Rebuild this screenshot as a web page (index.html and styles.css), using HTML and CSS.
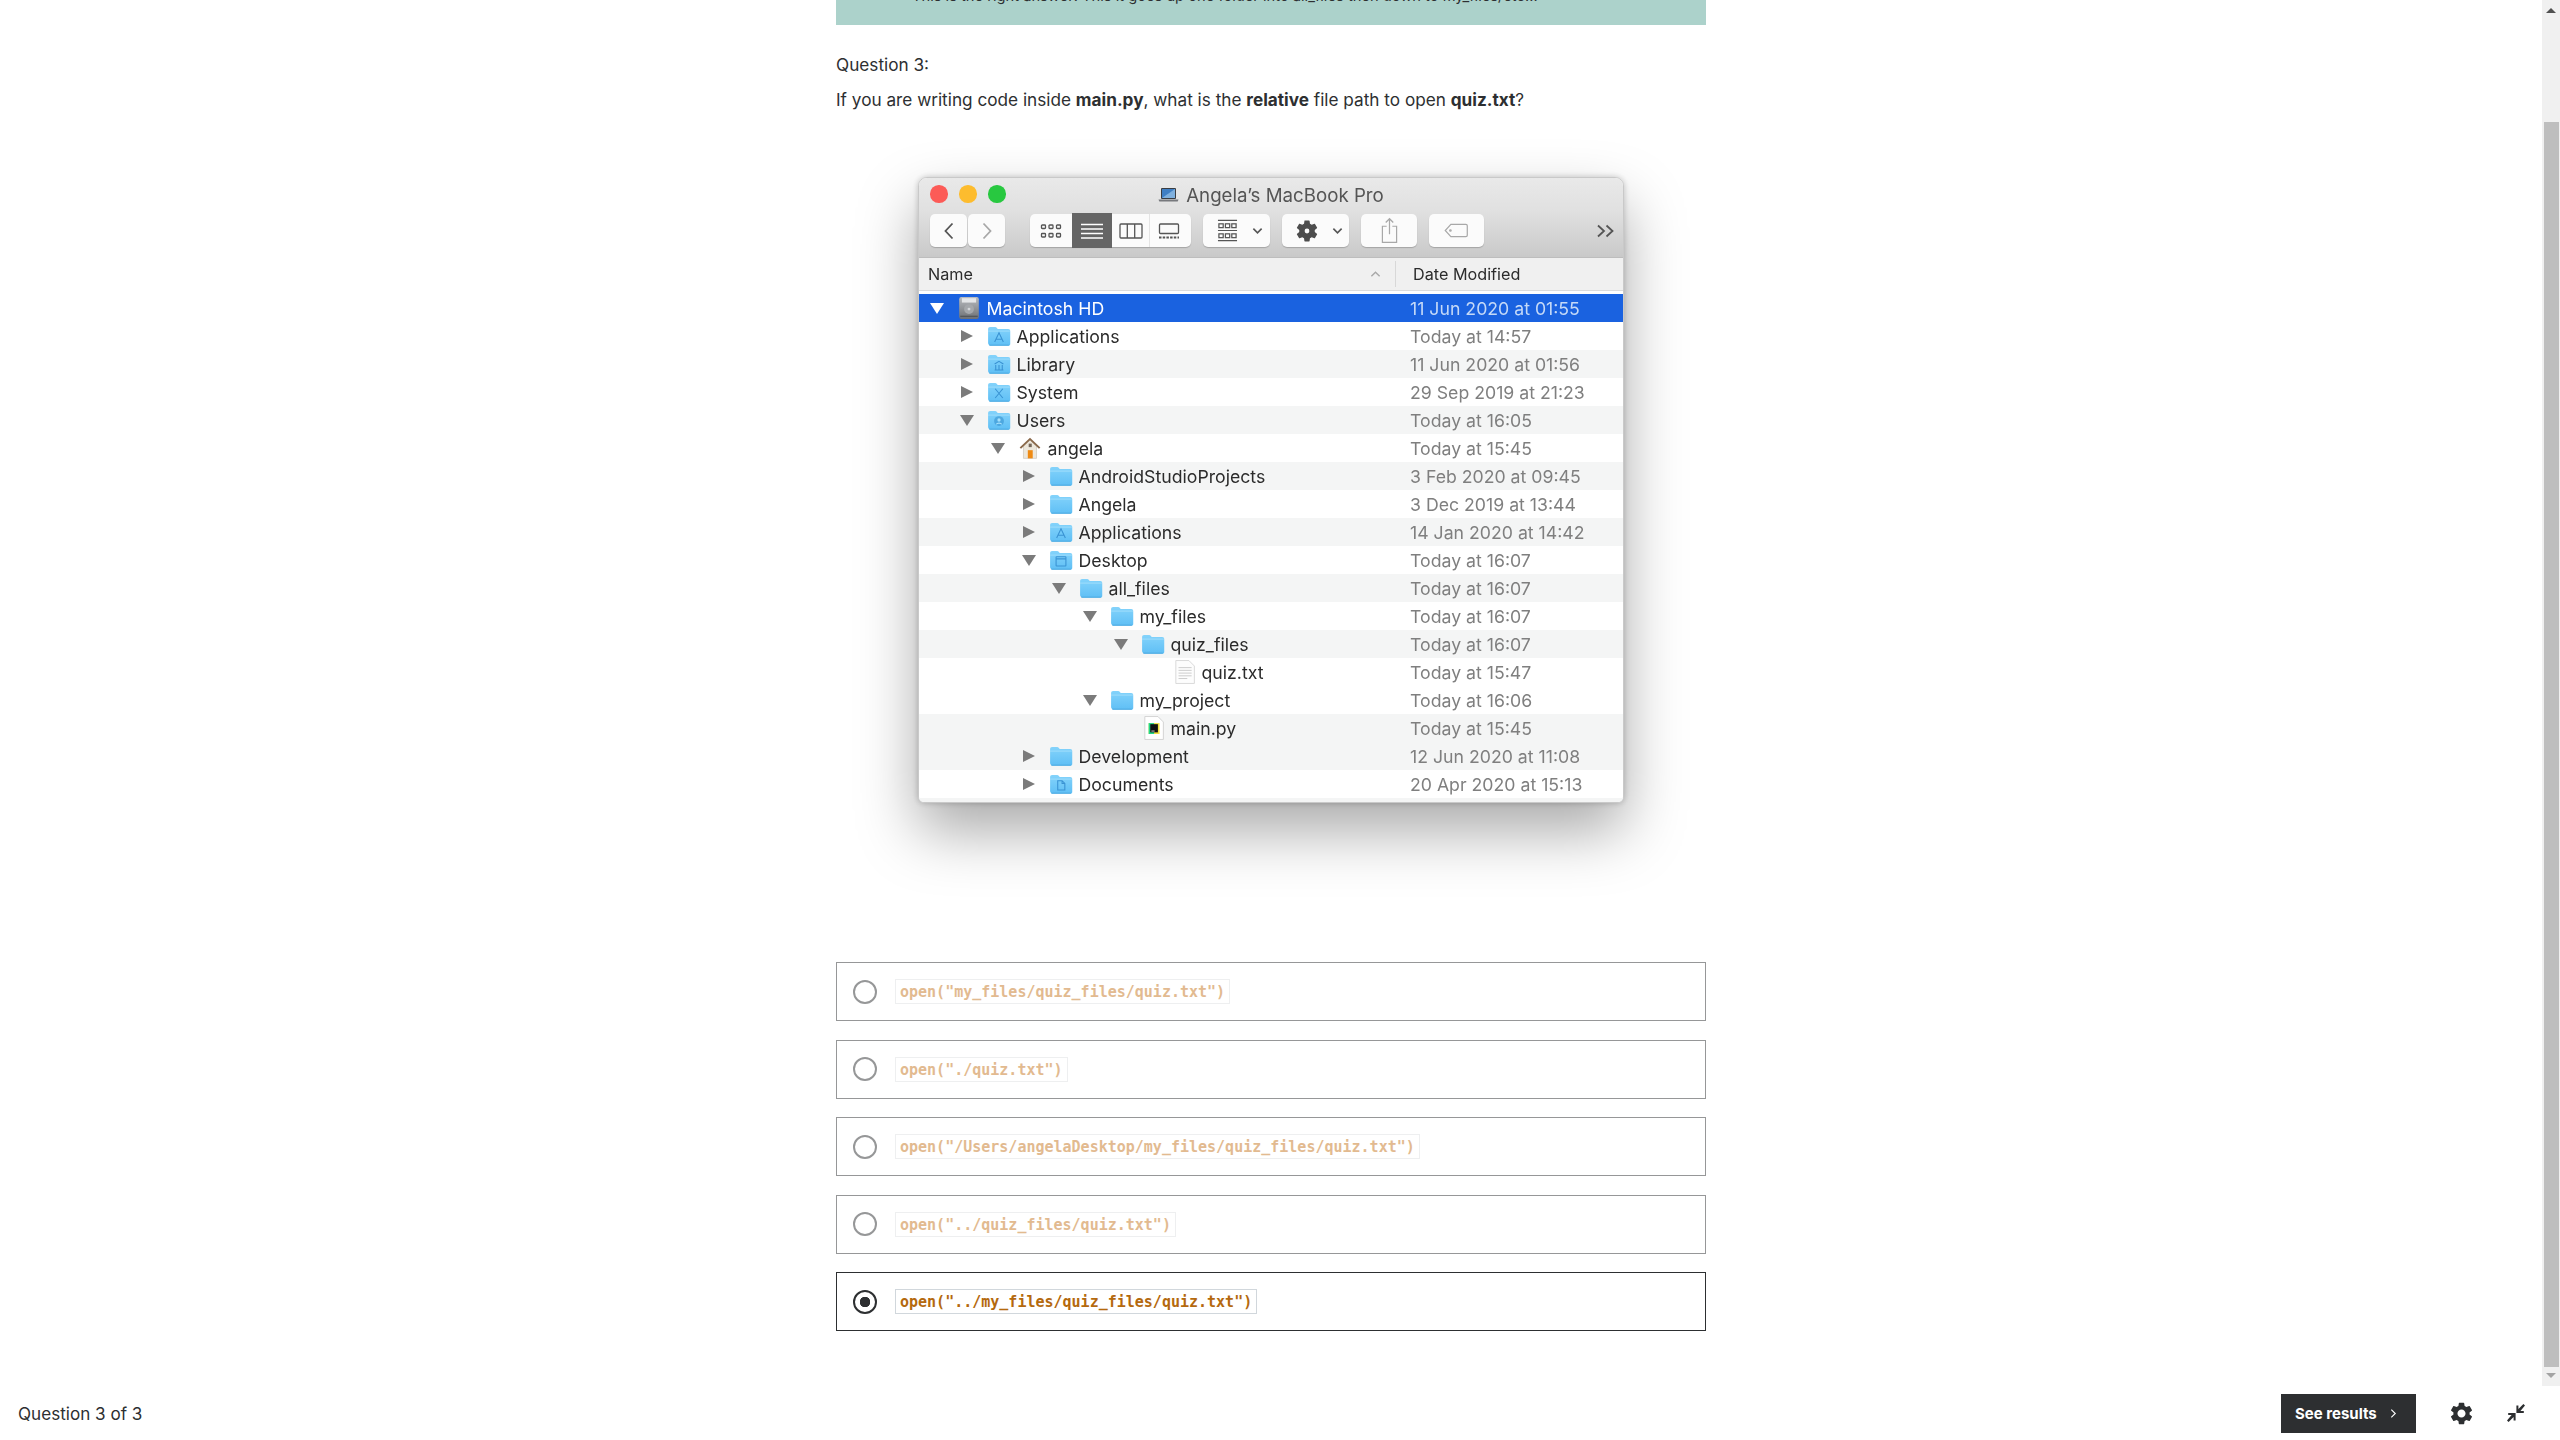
FILE: index.html
```html
<!DOCTYPE html>
<html>
  <head>
    <title>Question 3 of 3</title>
    <link rel="stylesheet" href="styles.css">
  </head>
  <body>
    <svg class="sprite" aria-hidden="true">
      <defs>
        <linearGradient id="folderFill" x1="0" y1="0" x2="0" y2="1">
          <stop offset="0" stop-color="#84d3fb"/>
          <stop offset="1" stop-color="#5fbff5"/>
        </linearGradient>
        <linearGradient id="driveFill" x1="0" y1="0" x2="0" y2="1">
          <stop offset="0" stop-color="#b9bcc0"/>
          <stop offset="1" stop-color="#6d7074"/>
        </linearGradient>
        <symbol id="folder" viewBox="0 0 22 19">
          <path d="M1 3.2C1 2 1.7 1.2 2.8 1.2h4.6c.8 0 1.2.3 1.7.9l.7.9h9.6c1.2 0 1.9.7 1.9 1.9v11.6c0 1.2-.7 1.9-1.9 1.9H2.9C1.7 17.5 1 16.8 1 15.6z" fill="url(#folderFill)"/>
          <path d="M1 5h20" stroke="#a5e0fc" stroke-width=".8"/>
          <path d="M2 17.9h18" stroke="#4ba6dc" stroke-width=".8"/>
        </symbol>
        <symbol id="gear" viewBox="0 0 24 24">
          <path d="M19.14 12.94c.04-.3.06-.61.06-.94 0-.32-.02-.64-.07-.94l2.03-1.58a.49.49 0 0 0 .12-.61l-1.92-3.32a.488.488 0 0 0-.59-.22l-2.39.96c-.5-.38-1.03-.7-1.62-.94l-.36-2.54a.484.484 0 0 0-.48-.41h-3.84c-.24 0-.43.17-.47.41l-.36 2.54c-.59.24-1.13.57-1.62.94l-2.39-.96c-.22-.08-.47 0-.59.22L2.74 8.87c-.12.21-.08.47.12.61l2.03 1.58c-.05.3-.09.63-.09.94s.02.64.07.94l-2.03 1.58a.49.49 0 0 0-.12.61l1.92 3.32c.12.22.37.29.59.22l2.39-.96c.5.38 1.03.7 1.62.94l.36 2.54c.05.24.24.41.48.41h3.84c.24 0 .44-.17.47-.41l.36-2.54c.59-.24 1.13-.56 1.62-.94l2.39.96c.22.08.47 0 .59-.22l1.92-3.32c.12-.22.07-.47-.12-.61l-2.01-1.58zM12 15.6c-1.98 0-3.6-1.62-3.6-3.6s1.62-3.6 3.6-3.6 3.6 1.62 3.6 3.6-1.62 3.6-3.6 3.6z"/>
        </symbol>
      </defs>
    </svg>

    <div class="player">
      <div class="viewport">
        <main class="content">
          <div class="banner">
            <p>This is the right answer! This it goes up one folder into all_files then down to my_files/etc...</p>
          </div>

          <p class="prompt prompt-first">Question 3:</p>
          <p class="prompt">If you are writing code inside <strong>main.py</strong>, what is the <strong>relative</strong> file path to open <strong>quiz.txt</strong>?</p>

          <div class="finder">
            <div class="titlebar">
              <div class="lights">
                <span class="light red"></span>
                <span class="light amber"></span>
                <span class="light green"></span>
              </div>
              <div class="title">
                <svg class="laptop" viewBox="0 0 21 16">
                  <rect x="3" y="1" width="15" height="11" rx="1" fill="#3a3d42"/>
                  <rect x="4" y="2" width="13" height="9" fill="#3f7fc4"/>
                  <path d="M4 11 17 2v9z" fill="#7fb0de"/>
                  <path d="M.5 12.5h20l-.8 2H1.3z" fill="#77797d"/>
                </svg>
                <span>Angela’s MacBook Pro</span>
              </div>
            </div>

            <div class="toolbar">
              <div class="tool nav-btn">
                <svg viewBox="0 0 14 20"><path d="M10.5 2.5 3.5 10l7 7.5" class="glyph"/></svg>
              </div>
              <div class="tool nav-btn nav-next">
                <svg viewBox="0 0 14 20"><path d="M3.5 2.5 10.5 10l-7 7.5" class="glyph faint"/></svg>
              </div>

              <div class="tool views">
                <span class="view view-icons">
                  <svg viewBox="0 0 22 16">
                    <g class="thin">
                      <rect x="1.5" y="2" width="4" height="3.5" rx=".8"/><rect x="9" y="2" width="4" height="3.5" rx=".8"/><rect x="16.5" y="2" width="4" height="3.5" rx=".8"/>
                      <rect x="1.5" y="10.5" width="4" height="3.5" rx=".8"/><rect x="9" y="10.5" width="4" height="3.5" rx=".8"/><rect x="16.5" y="10.5" width="4" height="3.5" rx=".8"/>
                    </g>
                  </svg>
                </span>
                <span class="view view-list">
                  <svg viewBox="0 0 22 16"><path d="M0 1.5h22M0 6h22M0 10.5h22M0 15h22" class="bars"/></svg>
                </span>
                <span class="view view-columns">
                  <svg viewBox="0 0 24 16"><g class="thin"><rect x="1" y="1" width="22" height="14" rx="1"/><path d="M8.3 1v14M15.7 1v14"/></g></svg>
                </span>
                <span class="view view-gallery">
                  <svg viewBox="0 0 22 16"><g class="thin"><rect x="1.5" y="1" width="19" height="9.5" rx="1"/></g><path d="M1 14.5h20" class="dots"/></svg>
                </span>
              </div>

              <div class="tool arrange">
                <svg class="arrange-icon" viewBox="0 0 22 24">
                  <g class="thin">
                    <path d="M1 1.5h20M1 12h20M1 22.5h20"/>
                    <rect x="2" y="5" width="4.5" height="4"/><rect x="8.8" y="5" width="4.5" height="4"/><rect x="15.5" y="5" width="4.5" height="4"/>
                    <rect x="2" y="15.5" width="4.5" height="4"/><rect x="8.8" y="15.5" width="4.5" height="4"/><rect x="15.5" y="15.5" width="4.5" height="4"/>
                  </g>
                </svg>
                <svg class="caret" viewBox="0 0 12 8"><path d="M1.5 1.5 6 6l4.5-4.5" class="glyph"/></svg>
              </div>

              <div class="tool action">
                <svg class="action-gear" viewBox="0 0 24 24">
                  <use href="#gear"/>
                  <circle cx="12" cy="12" r="5" fill="#4d4d4d"/>
                  <circle cx="12" cy="12" r="2.2" fill="#fbfbfb"/>
                </svg>
                <svg class="caret" viewBox="0 0 12 8"><path d="M1.5 1.5 6 6l4.5-4.5" class="glyph"/></svg>
              </div>

              <div class="tool share">
                <svg viewBox="0 0 18 28"><g class="thin faint-line"><path d="M6 9.5H1.5v17h15v-17H12"/><path d="M9 18V2M5 5.5 9 1.5l4 4"/></g></svg>
              </div>

              <div class="tool tag">
                <svg viewBox="0 0 26 16"><g class="thin faint-line"><path d="M7 1.5h16a1.5 1.5 0 0 1 1.5 1.5v10a1.5 1.5 0 0 1-1.5 1.5H7L1 8z"/><circle cx="6.5" cy="8" r=".8"/></g></svg>
              </div>

              <svg class="more" viewBox="0 0 17 14"><path d="M1 1.5 7 7l-6 5.5M9.5 1.5l6 5.5-6 5.5" class="glyph"/></svg>
            </div>

            <div class="columns">
              <span class="col-name">Name</span>
              <svg class="sort" viewBox="0 0 12 8"><path d="M1.5 6.5 6 2l4.5 4.5"/></svg>
              <span class="col-date">Date Modified</span>
            </div>

            <div class="list">
              <div class="row selected level-0">
                <i class="twist down"></i>
                <svg class="icon" viewBox="0 0 22 22">
                  <rect x="2" y="1" width="18" height="20" rx="2" fill="url(#driveFill)"/>
                  <rect x="4.5" y="2" width="13" height="4" fill="#e4e6e8"/>
                  <circle cx="11" cy="12" r="4.5" fill="#a5a8ac"/>
                  <circle cx="11" cy="12" r="1.3" fill="#d5d7da"/>
                  <path d="M3 18.5h16" stroke="#4a4c50"/>
                </svg>
                <span class="name">Macintosh HD</span>
                <span class="date">11 Jun 2020 at 01:55</span>
              </div>
              <div class="row level-1">
                <i class="twist"></i>
                <svg class="icon" viewBox="0 0 22 19"><use href="#folder"/><path d="M7 15 11 6.5 15 15M8 12.5h6" class="badge"/></svg>
                <span class="name">Applications</span>
                <span class="date">Today at 14:57</span>
              </div>
              <div class="row alt level-1">
                <i class="twist"></i>
                <svg class="icon" viewBox="0 0 22 19"><use href="#folder"/><path d="M7 9.5 11 7l4 2.5M8 10.5v4M11 10.5v4M14 10.5v4M7 15h8" class="badge"/></svg>
                <span class="name">Library</span>
                <span class="date">11 Jun 2020 at 01:56</span>
              </div>
              <div class="row level-1">
                <i class="twist"></i>
                <svg class="icon" viewBox="0 0 22 19"><use href="#folder"/><path d="M7.5 6.5 14.5 15M14.5 6.5 7.5 15" class="badge"/></svg>
                <span class="name">System</span>
                <span class="date">29 Sep 2019 at 21:23</span>
              </div>
              <div class="row alt level-1">
                <i class="twist down"></i>
                <svg class="icon" viewBox="0 0 22 19"><use href="#folder"/><circle cx="11" cy="10.5" r="4.5" fill="#3f9ad6" fill-opacity=".7"/><circle cx="11" cy="9.5" r="1.5" fill="#a5e0fc"/><path d="M8.5 13.5c.6-1.5 4.4-1.5 5 0" stroke="#a5e0fc" fill="none"/></svg>
                <span class="name">Users</span>
                <span class="date">Today at 16:05</span>
              </div>
              <div class="row level-2">
                <i class="twist down"></i>
                <svg class="icon" viewBox="0 0 22 22">
                  <path d="M5 9 11 3.5 17 9v11.5H5z" fill="#ece7dc" stroke="#c9c2b4" stroke-width=".6"/>
                  <path d="M11 1.5 1.5 10.5l1.3 1.2L11 4l8.2 7.7 1.3-1.2z" fill="#8a6a4c"/>
                  <rect x="9" y="13" width="4.5" height="7.5" fill="#ef8a12"/>
                  <rect x="9.8" y="7" width="2.8" height="3.2" fill="#76685a"/>
                </svg>
                <span class="name">angela</span>
                <span class="date">Today at 15:45</span>
              </div>
              <div class="row alt level-3">
                <i class="twist"></i>
                <svg class="icon" viewBox="0 0 22 19"><use href="#folder"/></svg>
                <span class="name">AndroidStudioProjects</span>
                <span class="date">3 Feb 2020 at 09:45</span>
              </div>
              <div class="row level-3">
                <i class="twist"></i>
                <svg class="icon" viewBox="0 0 22 19"><use href="#folder"/></svg>
                <span class="name">Angela</span>
                <span class="date">3 Dec 2019 at 13:44</span>
              </div>
              <div class="row alt level-3">
                <i class="twist"></i>
                <svg class="icon" viewBox="0 0 22 19"><use href="#folder"/><path d="M7 15 11 6.5 15 15M8 12.5h6" class="badge"/></svg>
                <span class="name">Applications</span>
                <span class="date">14 Jan 2020 at 14:42</span>
              </div>
              <div class="row level-3">
                <i class="twist down"></i>
                <svg class="icon" viewBox="0 0 22 19"><use href="#folder"/><rect x="6.5" y="6.5" width="9" height="8.5" rx=".5" class="badge"/><path d="M6.5 8.5h9" class="badge"/></svg>
                <span class="name">Desktop</span>
                <span class="date">Today at 16:07</span>
              </div>
              <div class="row alt level-4">
                <i class="twist down"></i>
                <svg class="icon" viewBox="0 0 22 19"><use href="#folder"/></svg>
                <span class="name">all_files</span>
                <span class="date">Today at 16:07</span>
              </div>
              <div class="row level-5">
                <i class="twist down"></i>
                <svg class="icon" viewBox="0 0 22 19"><use href="#folder"/></svg>
                <span class="name">my_files</span>
                <span class="date">Today at 16:07</span>
              </div>
              <div class="row alt level-6">
                <i class="twist down"></i>
                <svg class="icon" viewBox="0 0 22 19"><use href="#folder"/></svg>
                <span class="name">quiz_files</span>
                <span class="date">Today at 16:07</span>
              </div>
              <div class="row level-7">
                <i class="twist none"></i>
                <svg class="icon" viewBox="0 0 22 22">
                  <path d="M3.5.5h12l5 5v16h-17z" fill="#fdfdfd" stroke="#d5d5d5" stroke-width=".8"/>
                  <path d="M6 7h12M6 9.5h12M6 12h12M6 14.5h12M6 17h8" stroke="#c6c6c6" stroke-width=".8"/>
                </svg>
                <span class="name">quiz.txt</span>
                <span class="date">Today at 15:47</span>
              </div>
              <div class="row level-5">
                <i class="twist down"></i>
                <svg class="icon" viewBox="0 0 22 19"><use href="#folder"/></svg>
                <span class="name">my_project</span>
                <span class="date">Today at 16:06</span>
              </div>
              <div class="row alt level-6">
                <i class="twist none"></i>
                <svg class="icon" viewBox="0 0 22 22">
                  <path d="M3.5.5h12l5 5v16h-17z" fill="#fff" stroke="#cfcfcf" stroke-width=".8"/>
                  <rect x="7" y="6.5" width="10" height="10" fill="#f0e040"/>
                  <rect x="7" y="6.5" width="5" height="10" fill="#21d789"/>
                  <rect x="8.5" y="7.5" width="7" height="7.5" fill="#111"/>
                  <path d="M9.5 13.8h3" stroke="#fff" stroke-width=".7"/>
                </svg>
                <span class="name">main.py</span>
                <span class="date">Today at 15:45</span>
              </div>
              <div class="row alt level-3">
                <i class="twist"></i>
                <svg class="icon" viewBox="0 0 22 19"><use href="#folder"/></svg>
                <span class="name">Development</span>
                <span class="date">12 Jun 2020 at 11:08</span>
              </div>
              <div class="row level-3">
                <i class="twist"></i>
                <svg class="icon" viewBox="0 0 22 19"><use href="#folder"/><path d="M8 6.5h4l2.5 2.5v6H8zM12 6.5V9h2.5" class="badge"/></svg>
                <span class="name">Documents</span>
                <span class="date">20 Apr 2020 at 15:13</span>
              </div>
              <div class="row alt"></div>
            </div>
          </div>

          <ul class="answers">
            <li class="answer">
              <span class="radio"></span>
              <code>open("my_files/quiz_files/quiz.txt")</code>
            </li>
            <li class="answer">
              <span class="radio"></span>
              <code>open("./quiz.txt")</code>
            </li>
            <li class="answer">
              <span class="radio"></span>
              <code>open("/Users/angelaDesktop/my_files/quiz_files/quiz.txt")</code>
            </li>
            <li class="answer">
              <span class="radio"></span>
              <code>open("../quiz_files/quiz.txt")</code>
            </li>
            <li class="answer checked">
              <span class="radio"></span>
              <code>open("../my_files/quiz_files/quiz.txt")</code>
            </li>
          </ul>
        </main>

        <div class="scrollbar">
          <span class="arrow-up"></span>
          <span class="thumb"></span>
          <span class="arrow-down"></span>
        </div>
      </div>

      <footer class="footer">
        <span class="progress">Question 3 of 3</span>
        <button class="results">
          See results
          <svg viewBox="0 0 8 12"><path d="M1.5 1.5 6 6l-4.5 4.5"/></svg>
        </button>
        <svg class="settings" viewBox="0 0 24 24"><use href="#gear"/></svg>
        <svg class="compress" viewBox="0 0 20 20">
          <path d="M19 2.6 17.4 1l-5 5V2.6h-2V10h7.400V8h-3.400zM1 17.4 2.6 19l5-5v3.400h2V10H2.200v2h3.400z"/>
        </svg>
      </footer>
    </div>
  </body>
</html>
```

FILE: styles.css
```css
* {
  box-sizing: border-box;
}

html,
body {
  height: 100%;
}

body {
  margin: 0;
  overflow: hidden;
  background-color: #fff;
  color: #2d2f31;
  font-family: Inter, "Liberation Sans", Arial, sans-serif;
  font-size: 17px;
}

.sprite {
  display: block;
  width: 0;
  height: 0;
}

.player {
  display: flex;
  flex-direction: column;
  height: 1440px;
}

.viewport {
  display: flex;
  height: 1386px;
  overflow: hidden;
}

.content {
  flex: 1;
  min-width: 0;
  padding: 0 836px;
}

/* feedback box from the previous question, scrolled nearly out of view */
.banner {
  height: 25px;
  padding-left: 76px;
  overflow: hidden;
  background-color: #acd2cb;
}

.banner p {
  margin: -14px 0 0;
  font-size: 14.7px;
  line-height: 20px;
  white-space: nowrap;
}

.prompt {
  margin: 13px 0 0;
  font-size: 17.2px;
  line-height: 22px;
}

.prompt-first {
  margin-top: 29px;
}

/* the finder window */
.finder {
  width: 706px;
  height: 626px;
  margin: 66px auto 159px;
  overflow: hidden;
  border: 1px solid #c9c9c9;
  border-radius: 9px 9px 6px 6px;
  background-color: #fff;
  box-shadow: 0 28px 60px rgba(0, 0, 0, 0.34), 0 0 6px rgba(0, 0, 0, 0.22);
  color: #2b2b2b;
  filter: blur(0.4px);
}

.titlebar {
  display: flex;
  align-items: center;
  justify-content: center;
  position: relative;
  height: 34px;
  background: linear-gradient(#e9e9e9, #e0e0e0);
}

.lights {
  display: flex;
  gap: 11.5px;
  position: absolute;
  left: 11px;
  top: 7px;
}

.light {
  width: 17.5px;
  height: 17.5px;
  border-radius: 50%;
}

.red {
  background-color: #fc5b57;
}

.amber {
  background-color: #fdbc2e;
}

.green {
  background-color: #28c840;
}

.title {
  display: flex;
  align-items: center;
  gap: 7px;
  color: #555;
  font-size: 18.7px;
}

.laptop {
  width: 21px;
  height: 16px;
}

.toolbar {
  display: flex;
  align-items: center;
  height: 46px;
  padding: 0 9px 8px 11px;
  background: linear-gradient(#e0e0e0, #c9c9c9);
  border-bottom: 1px solid #bdbdbd;
}

.tool {
  display: flex;
  align-items: center;
  justify-content: center;
  height: 33px;
  border-radius: 5px;
  background-color: #fbfbfb;
  box-shadow: 0 1px 1px rgba(0, 0, 0, 0.2);
}

.glyph {
  fill: none;
  stroke: #555;
  stroke-width: 1.8;
}

.faint {
  stroke: #a8a8a8;
}

.thin {
  fill: none;
  stroke: #555;
  stroke-width: 1.3;
}

.faint-line {
  stroke: #a8a8a8;
}

.nav-btn {
  width: 37px;
}

.nav-btn svg {
  width: 14px;
  height: 20px;
}

.nav-next {
  margin-left: 1px;
}

.views {
  width: 161px;
  margin-left: 25px;
}

.view {
  display: flex;
  align-items: center;
  justify-content: center;
  height: 33px;
}

.view-icons {
  width: 42px;
}

.view-icons svg {
  width: 22px;
  height: 16px;
}

.view-list {
  width: 40px;
  height: 35px;
  background-color: #656565;
}

.view-list svg {
  width: 22px;
  height: 16px;
}

.bars {
  stroke: #fff;
  stroke-width: 1.4;
}

.view-columns {
  width: 38px;
  border-right: 1px solid #e4e4e4;
}

.view-columns svg {
  width: 24px;
  height: 16px;
}

.view-gallery {
  width: 41px;
  padding-right: 3px;
}

.view-gallery svg {
  width: 22px;
  height: 16px;
}

.dots {
  stroke: #555;
  stroke-width: 2;
  stroke-dasharray: 2.5 1.2;
}

.arrange {
  justify-content: flex-start;
  width: 67px;
  gap: 14px;
  margin-left: 12px;
  padding-left: 14px;
}

.arrange-icon {
  width: 21px;
  height: 23px;
}

.caret {
  width: 11px;
  height: 8px;
}

.action {
  justify-content: flex-start;
  width: 67px;
  gap: 12px;
  margin-left: 12px;
  padding-left: 12px;
}

.action-gear {
  width: 26px;
  height: 26px;
  fill: #4d4d4d;
}

.share {
  width: 56px;
  margin-left: 12px;
}

.share svg {
  width: 17px;
  height: 27px;
}

.tag {
  width: 55px;
  margin-left: 12px;
}

.tag svg {
  width: 25px;
  height: 15px;
}

.more {
  width: 17px;
  height: 14px;
  margin-left: auto;
}

.columns {
  display: flex;
  align-items: center;
  height: 33px;
  padding-left: 9px;
  background-color: #f0f0f0;
  border-bottom: 1px solid #dcdcdc;
  font-size: 16.2px;
}

.col-name {
  flex: 1;
}

.sort {
  width: 11px;
  height: 8px;
  margin-right: 14px;
  fill: none;
  stroke: #a8a8a8;
  stroke-width: 1.5;
}

.col-date {
  width: 228px;
  height: 26px;
  padding-left: 17px;
  border-left: 1px solid #d8d8d8;
  line-height: 26px;
}

.list {
  padding-top: 3px;
}

.row {
  display: flex;
  align-items: center;
  height: 28px;
  font-size: 17.7px;
}

.alt {
  background-color: #f4f5f5;
}

.selected {
  background-color: #1a62e0;
  color: #fff;
}

.selected .date {
  color: #c5d9f7;
}

.selected .twist.down {
  border-top-color: #fff;
}

.level-0 {
  padding-left: 10px;
}

.level-1 {
  padding-left: 40px;
}

.level-2 {
  padding-left: 71px;
}

.level-3 {
  padding-left: 102px;
}

.level-4 {
  padding-left: 132px;
}

.level-5 {
  padding-left: 163px;
}

.level-6 {
  padding-left: 194px;
}

.level-7 {
  padding-left: 225px;
}

.twist {
  display: block;
  width: 0;
  height: 0;
  margin-left: 2px;
  margin-right: 14px;
  border-left: 12px solid #7b7b7b;
  border-top: 6.5px solid transparent;
  border-bottom: 6.5px solid transparent;
}

.twist.down {
  margin-left: 1px;
  margin-right: 13px;
  border-left: 7px solid transparent;
  border-right: 7px solid transparent;
  border-top: 11px solid #7b7b7b;
  border-bottom: 0;
}

.twist.none {
  border-color: transparent;
}

.icon {
  flex: none;
  width: 24px;
  height: 24px;
  margin-right: 5.5px;
}

.badge {
  fill: none;
  stroke: #3a93d3;
  stroke-width: 1;
}

.name {
  flex: 1;
}

.date {
  width: 213px;
  color: #7f7f7f;
}

/* answer list */
.answers {
  display: flex;
  flex-direction: column;
  gap: 18.5px;
  margin: 0;
  padding: 0;
  list-style: none;
}

.answer {
  display: flex;
  align-items: center;
  height: 59px;
  padding-left: 16px;
  border: 1px solid #969798;
}

.radio {
  flex: none;
  width: 24px;
  height: 24px;
  margin-right: 18px;
  border: 2px solid #969798;
  border-radius: 50%;
}

code {
  padding: 4px 4px 2px;
  border: 1px solid #eeeff0;
  background-color: #fff;
  color: #e2ba90;
  font-family: "DejaVu Sans Mono", "Liberation Mono", monospace;
  font-size: 15px;
  font-weight: bold;
  line-height: 17px;
}

.checked {
  border-color: #2d2f31;
}

.checked .radio {
  border-color: #2d2f31;
  background: radial-gradient(circle, #2d2f31 0 5px, #fff 5.5px);
}

.checked code {
  border-color: #d1d7dc;
  color: #b4690e;
}

/* scrollbar column */
.scrollbar {
  display: flex;
  flex: none;
  flex-direction: column;
  align-items: center;
  width: 18px;
  background-color: #f0f0f0;
}

.arrow-up {
  width: 0;
  height: 0;
  margin-top: 8px;
  border-left: 5px solid transparent;
  border-right: 5px solid transparent;
  border-bottom: 5px solid #505050;
}

.thumb {
  width: 15px;
  height: 1245px;
  margin-top: 109px;
  margin-left: 1px;
  background-color: #bebebe;
}

.arrow-down {
  width: 0;
  height: 0;
  margin-top: 6px;
  border-left: 5px solid transparent;
  border-right: 5px solid transparent;
  border-top: 5px solid #a3a3a3;
}

/* bottom bar */
.footer {
  display: flex;
  align-items: center;
  height: 54px;
  padding: 0 34px 0 18px;
}

.progress {
  flex: 1;
  font-size: 17.1px;
}

.results {
  display: flex;
  align-items: center;
  gap: 13px;
  width: 135px;
  height: 39px;
  padding: 0 0 0 14px;
  border: 0;
  background-color: #2d2f31;
  color: #fff;
  font-family: Inter, "Liberation Sans", Arial, sans-serif;
  font-size: 15px;
  font-weight: bold;
}

.results svg {
  width: 7px;
  height: 11px;
  fill: none;
  stroke: #fff;
  stroke-width: 1.3;
}

.settings {
  width: 27px;
  height: 27px;
  margin-left: 32px;
  fill: #2d2f31;
}

.compress {
  width: 20px;
  height: 20px;
  margin-left: 31px;
  fill: #2d2f31;
}
```
